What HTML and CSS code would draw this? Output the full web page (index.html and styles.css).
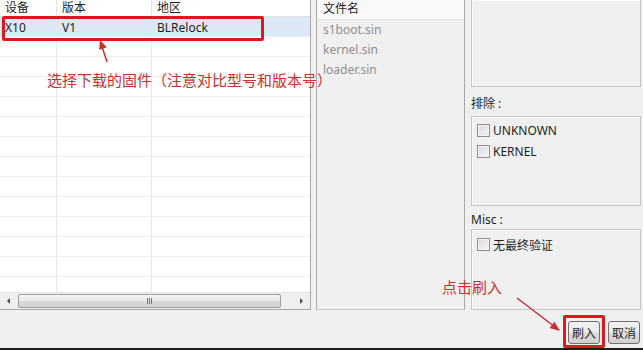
FILE: index.html
```html
<!DOCTYPE html>
<html lang="zh-CN">

<head>
    <meta charset="UTF-8">
    <meta name="viewport" content="width=device-width, initial-scale=1.0">
    <title>刷机</title>
    <link rel="stylesheet" href="styles.css">
</head>

<body>
    <div class="window">
        <div class="main">
            <!-- firmware list -->
            <div class="grid">
                <div class="row grid-head">
                    <span class="cell c1">设备</span>
                    <span class="cell c2">版本</span>
                    <span class="cell c3">地区</span>
                </div>
                <div class="grid-body">
                    <div class="row selected">
                        <span class="cell c1">X10</span>
                        <span class="cell c2">V1</span>
                        <span class="cell c3">BLRelock</span>
                    </div>
                    <div class="row"><span class="cell c1"></span><span class="cell c2"></span><span class="cell c3"></span></div>
                    <div class="row"><span class="cell c1"></span><span class="cell c2"></span><span class="cell c3"></span></div>
                    <div class="row"><span class="cell c1"></span><span class="cell c2"></span><span class="cell c3"></span></div>
                    <div class="row"><span class="cell c1"></span><span class="cell c2"></span><span class="cell c3"></span></div>
                    <div class="row"><span class="cell c1"></span><span class="cell c2"></span><span class="cell c3"></span></div>
                    <div class="row"><span class="cell c1"></span><span class="cell c2"></span><span class="cell c3"></span></div>
                    <div class="row"><span class="cell c1"></span><span class="cell c2"></span><span class="cell c3"></span></div>
                    <div class="row"><span class="cell c1"></span><span class="cell c2"></span><span class="cell c3"></span></div>
                    <div class="row"><span class="cell c1"></span><span class="cell c2"></span><span class="cell c3"></span></div>
                    <div class="row"><span class="cell c1"></span><span class="cell c2"></span><span class="cell c3"></span></div>
                    <div class="row"><span class="cell c1"></span><span class="cell c2"></span><span class="cell c3"></span></div>
                    <div class="row"><span class="cell c1"></span><span class="cell c2"></span><span class="cell c3"></span></div>
                    <div class="row"><span class="cell c1"></span><span class="cell c2"></span><span class="cell c3"></span></div>
                </div>
                <div class="hscroll">
                    <span class="sbtn"><span class="tri tri-left"></span></span>
                    <div class="thumb"><span class="grip"></span></div>
                    <span class="track"></span>
                    <span class="sbtn"><span class="tri tri-right"></span></span>
                </div>
            </div>

            <!-- files -->
            <div class="files">
                <div class="files-head">文件名</div>
                <ul class="file-list">
                    <li>s1boot.sin</li>
                    <li>kernel.sin</li>
                    <li>loader.sin</li>
                </ul>
            </div>

            <!-- options -->
            <div class="side">
                <div class="group group-top"></div>
                <div class="label label-exclude">排除 :</div>
                <div class="group group-exclude">
                    <label class="check"><span class="box"></span>UNKNOWN</label>
                    <label class="check"><span class="box"></span>KERNEL</label>
                </div>
                <div class="label label-misc">Misc :</div>
                <div class="group group-misc">
                    <label class="check"><span class="box"></span>无最终验证</label>
                </div>
            </div>
        </div>

        <div class="actions">
            <button class="btn">刷入</button>
            <button class="btn">取消</button>
        </div>

        <!-- annotations -->
        <div class="mark mark-row"></div>
        <div class="mark mark-btn"></div>
        <div class="note note-select">选择下载的固件（注意对比型号和版本号）</div>
        <div class="note note-flash">点击刷入</div>
        <svg class="arrows" width="643" height="350" viewBox="0 0 643 350">
            <line x1="107" y1="62" x2="102.5" y2="48" stroke="#d42a2a" stroke-width="1.5" />
            <polygon points="100,40 106.8,47.2 99.2,49.8" fill="#d42a2a" />
            <line x1="517" y1="298" x2="553" y2="325.5" stroke="#d42a2a" stroke-width="1.5" />
            <polygon points="560,331 549.6,328.1 554.5,321.7" fill="#d42a2a" />
        </svg>
    </div>
</body>

</html>
```

FILE: styles.css
```css
* {
    box-sizing: border-box;
}

body {
    margin: 0;
    background-color: #f0f0f0;
    font-family: "Noto Sans", "Noto Sans CJK SC", sans-serif;
    font-size: 12px;
    color: #1e1e1e;
}

.window {
    position: relative;
    width: 643px;
    height: 350px;
    border-bottom: 2px solid #1d1d1d;
    overflow: hidden;
}

.main {
    display: flex;
    height: 310px;
}

/* firmware grid */
.grid {
    display: flex;
    flex-direction: column;
    width: 311px;
    height: 310px;
    background-color: #fff;
    border-right: 1px solid #a8a8a8;
    border-bottom: 1px solid #a8a8a8;
}

.row {
    display: flex;
    flex: none;
    height: 20px;
    border-bottom: 1px solid #efefef;
}

.cell {
    padding-left: 5px;
    line-height: 21px;
    border-right: 1px solid #e6e6e6;
    white-space: nowrap;
}

.c1 {
    width: 57px;
}

.c2 {
    width: 95px;
}

.c3 {
    flex: 1;
    border-right: none;
}

.grid-head {
    height: 17px;
    border-bottom: 1px solid #e2e2e2;
}

.grid-head .cell {
    line-height: 16px;
}

.selected {
    background-color: #dde8f6;
}

.grid-body {
    flex: 1;
    overflow: hidden;
}

.hscroll {
    display: flex;
    align-items: center;
    height: 17px;
    background-color: #efefef;
    border-top: 1px solid #e4e4e4;
}

.sbtn {
    display: flex;
    align-items: center;
    justify-content: center;
    width: 17px;
    height: 100%;
}

.tri {
    width: 0;
    height: 0;
    border-top: 3px solid transparent;
    border-bottom: 3px solid transparent;
}

.tri-left {
    border-right: 3px solid #4a4a4a;
}

.tri-right {
    border-left: 3px solid #4a4a4a;
}

.thumb {
    display: flex;
    align-items: center;
    justify-content: center;
    width: 263px;
    height: 14px;
    margin-left: 1px;
    border: 1px solid #9c9c9c;
    border-radius: 2px;
    background: linear-gradient(#f6f6f6, #e8e8e8 50%, #d9d9d9 51%, #d2d2d2);
}

.grip {
    width: 5px;
    height: 6px;
    border-left: 1px solid #777;
    border-right: 1px solid #777;
    position: relative;
}

.grip::after {
    content: "";
    position: absolute;
    left: 1px;
    top: 0;
    height: 6px;
    border-left: 1px solid #777;
}

.track {
    flex: 1;
}

/* file list */
.files {
    width: 149px;
    height: 310px;
    margin-left: 5px;
    background-color: #f0f0f0;
    border-left: 1px solid #a8a8a8;
    border-right: 1px solid #a8a8a8;
    border-bottom: 1px solid #c4c4c4;
}

.files-head {
    height: 20px;
    padding-left: 6px;
    line-height: 18px;
    background-color: #f9f9f9;
    border-bottom: 1px solid #e2e2e2;
}

.file-list {
    margin: 0;
    padding: 0 0 0 6px;
    list-style: none;
    color: #8e8e8e;
}

.file-list li {
    height: 20px;
    line-height: 20px;
}

/* options */
.side {
    display: flex;
    flex-direction: column;
    width: 170px;
    height: 310px;
    margin-left: 6px;
}

.group {
    border: 1px solid #c6c6c6;
    box-shadow: inset 1px 1px 0 #fbfbfb;
    background-color: #f0f0f0;
}

.group-top {
    height: 88px;
    margin-top: -1px;
}

.label {
    display: flex;
    align-items: center;
}

.label-exclude {
    height: 29px;
    padding-top: 3px;
}

.label-misc {
    height: 23px;
    padding-top: 4px;
}

.group-exclude {
    height: 90px;
    padding: 3px 5px;
}

.group-misc {
    flex: 1;
    padding: 4px 5px;
}

.check {
    display: flex;
    align-items: center;
    gap: 3px;
    height: 21px;
}

.box {
    width: 13px;
    height: 13px;
    border: 1px solid #8e8f8f;
    background: linear-gradient(135deg, #d8d8d8, #f6f6f6);
    box-shadow: inset 0 0 0 1px #f4f4f4;
}

/* buttons */
.actions {
    display: flex;
    justify-content: flex-end;
    gap: 8px;
    height: 38px;
    padding: 11px 3px 0 0;
}

.btn {
    width: 32px;
    height: 23px;
    padding: 0;
    font: inherit;
    color: #1e1e1e;
    border: 1px solid #707070;
    border-radius: 3px;
    background: linear-gradient(#f3f3f3, #ebebeb 45%, #dddddd 55%, #cfcfcf);
}

/* annotations */
.mark {
    position: absolute;
    border: 3px solid #e3161e;
    border-radius: 2px;
}

.mark-row {
    left: 2px;
    top: 16px;
    width: 262px;
    height: 25px;
}

.mark-btn {
    left: 563px;
    top: 315px;
    width: 42px;
    height: 33px;
}

.note {
    position: absolute;
    font-family: "Noto Sans CJK SC", sans-serif;
    line-height: 18px;
    color: #c9302c;
    white-space: nowrap;
}

.note-select {
    left: 47px;
    top: 71px;
    font-size: 15px;
}

.note-flash {
    left: 442px;
    top: 278px;
    font-size: 15px;
}

.arrows {
    position: absolute;
    left: 0;
    top: 0;
    pointer-events: none;
}
```
